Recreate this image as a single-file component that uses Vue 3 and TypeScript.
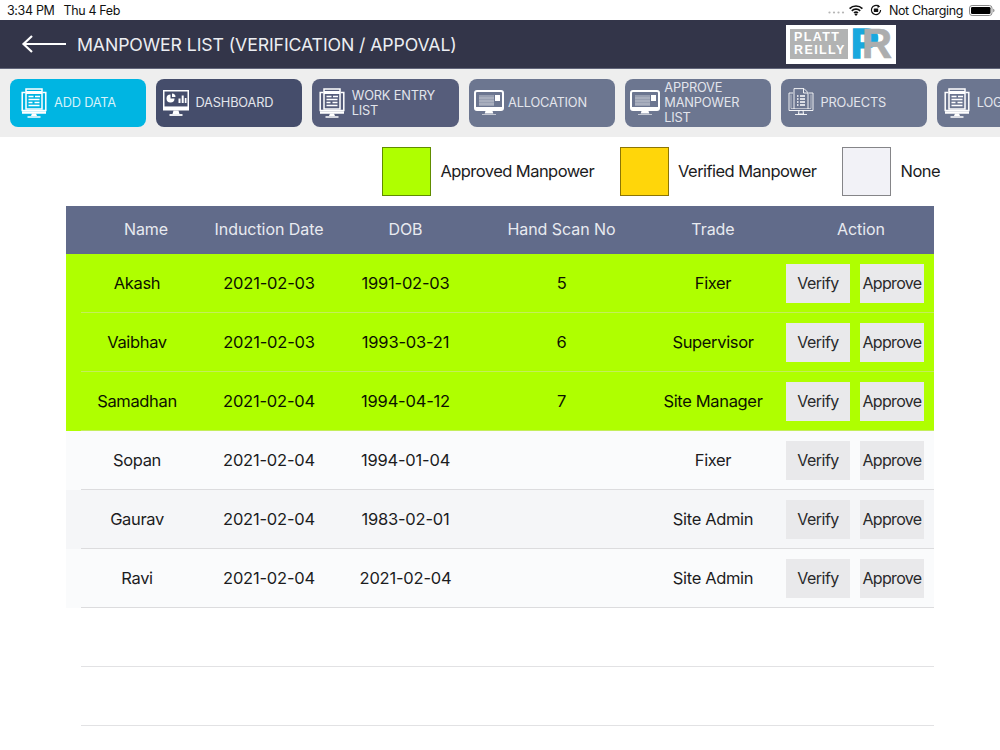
<script setup lang="ts">
type NavItem = { label: string; icon: string; tone: string };
type Person = { name: string; induction: string; dob: string; scan: string; trade: string; tone: string };

const navItems: NavItem[] = [
  { label: 'ADD DATA', icon: 'form', tone: 'active' },
  { label: 'DASHBOARD', icon: 'dash', tone: 'navy' },
  { label: 'WORK ENTRY LIST', icon: 'form', tone: 'slate' },
  { label: 'ALLOCATION', icon: 'screen', tone: 'steel' },
  { label: 'APPROVE MANPOWER LIST', icon: 'screen', tone: 'steel' },
  { label: 'PROJECTS', icon: 'proj', tone: 'steel' },
  { label: 'LOG', icon: 'form', tone: 'steel' }
];

const legend = [
  { label: 'Approved Manpower', color: 'green' },
  { label: 'Verified Manpower', color: 'yellow' },
  { label: 'None', color: 'none' }
];

const headers = ['Name', 'Induction Date', 'DOB', 'Hand Scan No', 'Trade', 'Action'];

const people: Person[] = [
  { name: 'Akash', induction: '2021-02-03', dob: '1991-02-03', scan: '5', trade: 'Fixer', tone: 'approved' },
  { name: 'Vaibhav', induction: '2021-02-03', dob: '1993-03-21', scan: '6', trade: 'Supervisor', tone: 'approved' },
  { name: 'Samadhan', induction: '2021-02-04', dob: '1994-04-12', scan: '7', trade: 'Site Manager', tone: 'approved' },
  { name: 'Sopan', induction: '2021-02-04', dob: '1994-01-04', scan: '', trade: 'Fixer', tone: 'plain' },
  { name: 'Gaurav', induction: '2021-02-04', dob: '1983-02-01', scan: '', trade: 'Site Admin', tone: 'alt' },
  { name: 'Ravi', induction: '2021-02-04', dob: '2021-02-04', scan: '', trade: 'Site Admin', tone: 'plain' }
];
</script>

<template>
  <div class="page">
    <div class="status">
      <div class="status-left">
        <span>3:34 PM</span>
        <span>Thu 4 Feb</span>
      </div>
      <div class="status-right">
        <svg class="dots" width="17" height="3" viewBox="0 0 17 3">
          <circle cx="1.5" cy="1.5" r="1.1" /><circle cx="6" cy="1.5" r="1.1" /><circle cx="10.5" cy="1.5" r="1.1" /><circle cx="15" cy="1.5" r="1.1" />
        </svg>
        <svg class="wifi" width="14" height="11" viewBox="0 0 14 11">
          <path d="M0.6 3.6a9.2 9.2 0 0 1 12.8 0M2.8 5.9a6 6 0 0 1 8.4 0M5 8a2.9 2.9 0 0 1 4 0" fill="none" stroke="#111" stroke-width="1.7" />
          <path d="M7 11 5.4 9.3a2.3 2.3 0 0 1 3.2 0Z" fill="#111" />
        </svg>
        <svg class="lock" width="12" height="12" viewBox="0 0 12 12">
          <path d="M10.6 6A4.6 4.6 0 1 1 8.6 2.2" fill="none" stroke="#111" stroke-width="1.2" />
          <path d="M7.6 0.4 10.2 2.4 7.6 4Z" fill="#111" />
          <rect x="3.8" y="4.6" width="4.4" height="3.4" rx="0.5" fill="#111" />
        </svg>
        <span class="charging">Not Charging</span>
        <svg class="battery" width="26" height="11" viewBox="0 0 26 11">
          <rect x="0.5" y="0.5" width="22.5" height="10" rx="2.6" fill="none" stroke="#888" />
          <rect x="2" y="2" width="19.5" height="7" rx="1.3" fill="#000" />
          <path d="M24.2 3.7c.9.3 1.3 1 1.3 1.8s-.4 1.5-1.3 1.8Z" fill="#888" />
        </svg>
      </div>
    </div>

    <header class="topbar">
      <div class="title-group">
        <svg class="back" width="46" height="20" viewBox="0 0 46 20">
          <path d="M45 10H3M11 2 2.500 10l8.500 8" fill="none" stroke="#fff" stroke-width="2.200" />
        </svg>
        <h1>MANPOWER LIST (VERIFICATION / APPOVAL)</h1>
      </div>
      <div class="logo">
        <div class="logo-word"><span>PLATT</span><span>REILLY</span></div>
        <div class="logo-mark"><span class="mark-p">P</span><span class="mark-r">R</span></div>
      </div>
    </header>

    <nav class="nav">
      <button v-for="item in navItems" :key="item.label" class="nav-btn" :class="item.tone" type="button">
        <span class="nav-icon">
          <svg v-if="item.icon === 'form'" width="26" height="30" viewBox="0 0 26 30" fill="none" stroke="#fff">
            <path d="M4.500 4.500H1.200v18h23.600v-18h-3.300" stroke-width="1.500" />
            <rect x="5" y="1" width="16" height="20" stroke-width="1.500" />
            <path d="M5 4.500h16" stroke-width="3" />
            <path d="M7.500 8.500h5M14 8.500h5M7.500 11.500h11M7.500 14.500h4M13.500 14.500h5M7.500 17.500h11" stroke-width="1.400" />
            <path d="M1 24.500h24" stroke-width="2.500" />
            <path d="M11 25.500 10 28h6l-1-2.500Z" fill="#fff" stroke="none" />
            <path d="M6.500 29h13" stroke-width="1.500" />
          </svg>
          <svg v-else-if="item.icon === 'dash'" width="26" height="26" viewBox="0 0 26 26" fill="none" stroke="#fff">
            <rect x="0.750" y="0.750" width="24.500" height="19" stroke-width="1.500" />
            <path d="M1 18.200h24" stroke-width="3.500" />
            <path d="M7.500 4.500a4 4 0 1 0 4 4h-4Z" fill="#fff" stroke="none" />
            <path d="M9 3.500a3.500 3.500 0 0 1 3.500 3.500H9Z" fill="#fff" stroke="none" />
            <path d="M15.500 8.500h2v4.500h-2ZM18.700 5.500h2V13h-2ZM21.800 8h1.700v5h-1.700Z" fill="#fff" stroke="none" />
            <path d="M10.500 20.500 9.500 24h7l-1-3.500Z" fill="#fff" stroke="none" />
            <path d="M6.500 25h13" stroke-width="1.800" />
          </svg>
          <svg v-else-if="item.icon === 'screen'" width="30" height="26" viewBox="0 0 30 26" fill="none" stroke="#fff">
            <rect x="1" y="1" width="28" height="19" rx="2" stroke-width="2" />
            <path d="M1.500 18.500h27" stroke-width="3" />
            <rect x="5" y="5" width="15" height="11" fill="#fff" fill-opacity="0.3" stroke="none" />
            <path d="M5 8h15M5 11h15M5 14h15" stroke="#fff" stroke-opacity="0.35" />
            <rect x="21" y="5" width="5" height="6" fill="#fff" stroke="none" />
            <path d="M11.500 21h7l.800 2.500h-8.600Z" fill="#fff" stroke="none" />
            <path d="M8 24.500h14" stroke="#fff" stroke-opacity="0.6" />
          </svg>
          <svg v-else width="26" height="29" viewBox="0 0 26 29" fill="none" stroke="#fff" stroke-width="0.900">
            <path d="M5 5H1v17.500h24V5h-4" />
            <path d="M3 6.500v14h20v-14" stroke-opacity="0.6" />
            <path d="M6 21V0.600h10l4 4V21" />
            <path d="M15.500 0.800v4.200h4.500" />
            <path d="M9 8h1.500M12 8h5M9 11h1.500M12 11h5M9 14h1.500M12 14h5M9 17h1.500M12 17h5" stroke-width="1.300" />
            <path d="M11 22.500 10.500 26h5l-.500-3.500M7 26.500h12" />
          </svg>
        </span>
        <span class="nav-label">{{ item.label }}</span>
      </button>
    </nav>

    <section class="legend">
      <div v-for="entry in legend" :key="entry.label" class="legend-item">
        <span class="swatch" :class="entry.color"></span>
        <span class="legend-text">{{ entry.label }}</span>
      </div>
    </section>

    <section class="table">
      <div class="head-row">
        <div v-for="h in headers" :key="h" class="head-cell">{{ h }}</div>
      </div>
      <div v-for="p in people" :key="p.name" class="row" :class="p.tone">
        <div class="cells">
          <div>{{ p.name }}</div>
          <div class="num">{{ p.induction }}</div>
          <div class="num">{{ p.dob }}</div>
          <div>{{ p.scan }}</div>
          <div>{{ p.trade }}</div>
          <div class="actions">
            <button type="button">Verify</button>
            <button type="button" class="approve">Approve</button>
          </div>
        </div>
        <div class="rule"></div>
      </div>
      <div v-for="n in 2" :key="n" class="row empty">
        <div class="cells"></div>
        <div class="rule"></div>
      </div>
    </section>
  </div>
</template>

<style scoped>
.page {
  width: 1000px;
  height: 750px;
  overflow: hidden;
  background: #fff;
  font-family: Inter, "Liberation Sans", sans-serif;
  color: #1c1c1e;
}

.status {
  height: 20px;
  display: flex;
  justify-content: space-between;
  align-items: center;
  padding: 0 5px 0 7px;
  box-sizing: border-box;
  font-size: 12.500px;
  letter-spacing: -0.350px;
  color: #111;
}
.status-left { display: flex; gap: 9px; }
.status-right { display: flex; align-items: center; }
.dots { fill: #b5b5b5; margin-right: 4px; margin-top: 4px; }
.wifi { margin-right: 7px; }
.lock { margin-right: 7px; }
.charging { margin-right: 6px; }

.topbar {
  height: 49px;
  background: #333549;
  border-bottom: 1px solid #62667a;
  box-sizing: border-box;
  display: flex;
  align-items: center;
  justify-content: space-between;
  padding: 0 104px 0 21px;
}
.title-group { display: flex; align-items: center; gap: 10px; }
.back { display: block; }
h1 {
  margin: 0;
  font-size: 17.700px;
  letter-spacing: -0.110px;
  font-weight: 400;
  color: #eceef2;
  white-space: nowrap;
}

.logo {
  width: 110px;
  height: 39px;
  background: #fff;
  box-sizing: border-box;
  padding: 4px;
  display: flex;
  gap: 3px;
}
.logo-word {
  width: 60px;
  height: 30px;
  background: #b2b3b3;
  color: #fff;
  font: 700 12.500px/12.500px "Liberation Sans", sans-serif;
  letter-spacing: 1.400px;
  display: flex;
  flex-direction: column;
  justify-content: center;
  padding-left: 4px;
  box-sizing: border-box;
}
.logo-mark {
  display: flex;
  font: 700 42px/42px "Liberation Sans", sans-serif;
  height: 42px;
  margin-top: -6px;
}
.mark-p { color: #19a8de; -webkit-text-stroke: 1.500px #19a8de; }
.mark-r { color: #acadae; margin-left: -17px; -webkit-text-stroke: 0.600px #acadae; }

.nav {
  height: 68px;
  background: #eeeeee;
  display: flex;
  gap: 10px;
  align-items: center;
  padding-left: 10px;
  box-sizing: border-box;
  overflow: hidden;
}
.nav-btn {
  flex: 0 0 146.250px;
  height: 48px;
  border: 0;
  border-radius: 8px;
  padding: 0 0 1px 2px;
  display: flex;
  align-items: center;
  gap: 1.500px;
  text-align: left;
  font: 400 12.800px/15px Inter, "Liberation Sans", sans-serif;
  letter-spacing: -0.180px;
  color: #e3e5ec;
}
.nav-btn.active {
  flex-basis: 136px;
  background: #00b5e2;
  padding-left: 6px;
  gap: 2px;
  color: #d5f2fb;
}
.navy { background: #454d6b; }
.slate { background: #565d7b; }
.steel { background: #6c7690; }
.nav-icon {
  flex: 0 0 36px;
  display: flex;
  justify-content: center;
}
.nav-label { max-width: 100px; }

.legend {
  height: 69px;
  display: flex;
  justify-content: flex-end;
  gap: 25.500px;
  padding: 10px 60px 0 0;
  box-sizing: border-box;
  font-size: 16.500px;
  letter-spacing: -0.550px;
}
.legend-item { display: flex; align-items: center; gap: 9.500px; height: 49px; }
.legend-text { padding-bottom: 2px; }
.swatch {
  width: 49px;
  height: 49px;
  box-sizing: border-box;
  border: 1px solid rgba(0, 0, 0, 0.45);
}
.swatch.green { background: #afff00; }
.swatch.yellow { background: #ffd60a; }
.swatch.none { background: #f2f2f7; }

.table {
  width: 868px;
  margin-left: 66px;
}
.head-row, .cells {
  display: grid;
  grid-template-columns: 142px 122px 151px 161px 142px 150px;
  align-items: center;
  text-align: center;
}
.head-row {
  height: 48px;
  padding-bottom: 2px;
  box-sizing: border-box;
  background: #616b8a;
  color: #e8eaf0;
  font-size: 16px;
  letter-spacing: -0.060px;
}
.head-cell:first-child { padding-left: 18px; }
.head-cell:last-child { padding-left: 4px; }

.row { font-size: 16.500px; letter-spacing: -0.350px; }
.num { letter-spacing: -0.200px; }
.cells { height: 58px; }
.rule { height: 1px; margin-left: 15px; background: #dcdcde; }
.row.approved { background: #afff00; color: #0d1200; }
.row.approved .rule { background: #c4ee5c; }
.row.plain { background: #fafbfc; }
.row.alt { background: #f5f6f8; }
.row.empty .rule { background: #e2e2e4; }

.actions {
  display: flex;
  gap: 10px;
  justify-content: flex-end;
  padding-right: 10px;
}
.actions button {
  width: 64px;
  height: 39px;
  padding: 0;
  border: 0;
  background: #e9e9eb;
  color: #2a2a2c;
  font: 400 16px Inter, "Liberation Sans", sans-serif;
  letter-spacing: -0.500px;
}
.actions .approve { letter-spacing: -0.650px; }
</style>

<style>
body { background: #fff; }
</style>
